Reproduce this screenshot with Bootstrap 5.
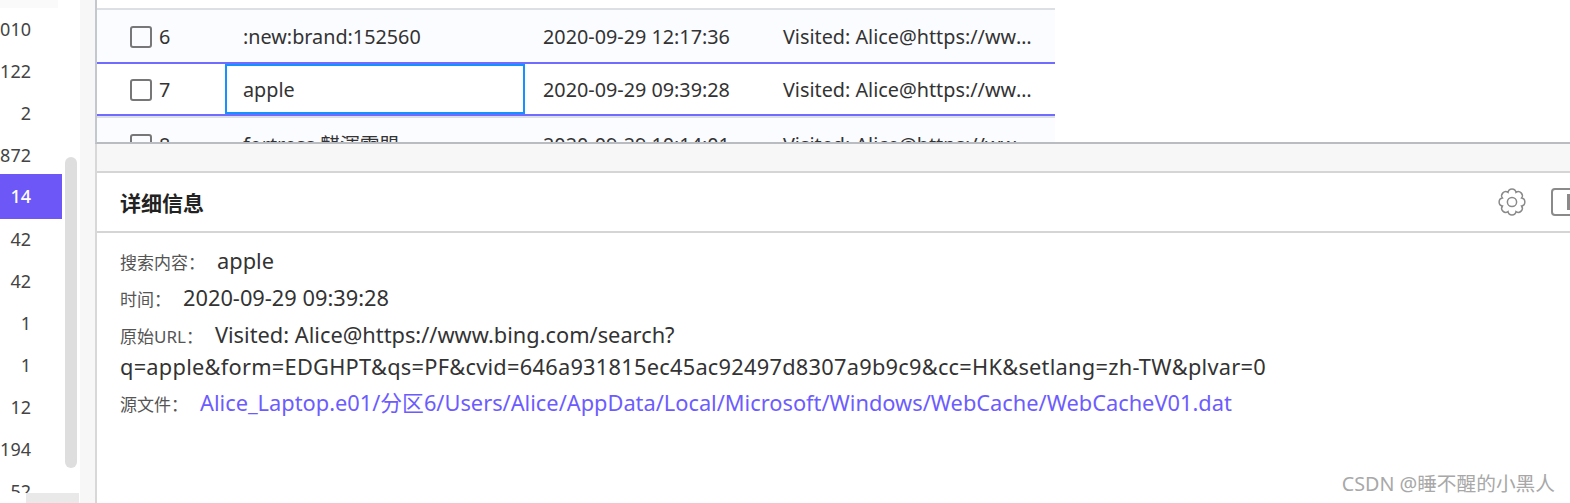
<!DOCTYPE html>
<html lang="zh-CN">
<head>
<meta charset="utf-8">
<title>详细信息</title>
<link href="https://cdn.jsdelivr.net/npm/bootstrap@5.3.0/dist/css/bootstrap.min.css" rel="stylesheet">
<style>
html,body{height:503px;overflow:hidden;}
body{font-family:"Noto Sans","Noto Sans CJK SC",sans-serif;font-size:18px;color:#333;background:#fff;}
.shell{height:503px;position:relative;overflow:hidden;}
.side{width:62px;height:493px;overflow:hidden;flex:none;}
.side-cap{height:8px;width:58px;background:#fafafa;}
.side-row{height:42px;padding-right:31px;color:#444;white-space:nowrap;}
.side-row.on{height:45px;margin:-2px 0 -1px;background:#6e57f7;color:#fff;font-weight:500;}
.side-thumb{position:absolute;left:65px;top:157px;width:12px;height:311px;border-radius:6px;background:#dedede;}
.side-bar{position:absolute;left:26px;top:493px;width:53px;height:10px;background:#e9e9e9;}
.gutter{width:33px;background:linear-gradient(90deg,#fff 18px,#f7f7f7 18px);flex:none;}
.main{border-left:2px solid #d8d8d8;min-width:0;}
.top-pane{height:144px;overflow:hidden;border-bottom:2px solid #b9bdc2;background:#fff;margin-left:-2px;border-left:2px solid #c4c7cc;}
.grid-wrap{width:958px;padding-top:8px;font-size:19.8px;}
.grid-row{height:54px;border-top:2px solid #dcdfe3;background:#fbfcff;white-space:nowrap;padding-top:1px;}
.grid-row.sel{height:54px;border-top:2px solid #6f6cff;border-bottom:2px solid #6f6cff;background:#fff;padding-top:0;}
.cell-a{width:128px;padding-left:33px;gap:7px;flex:none;}
.tick{width:22px;height:22px;border:2px solid #777;border-radius:3px;display:block;}
.cell-b{width:300px;padding-left:16px;border:2px solid transparent;flex:none;}
.cell-b.focus{border-color:#1890ff;padding-top:2px;}
.sel .cell-c,.sel .cell-d,.sel .cell-a{padding-top:2px;}
.cell-c{width:240px;padding-left:18px;flex:none;}
.cell-d{width:290px;padding:0 20px 0 18px;overflow:hidden;text-overflow:ellipsis;white-space:nowrap;display:block;flex:none;}
.band{height:27px;background:#f7f7f7;}
.detail{background:#fff;}
.detail-head{height:62px;border-top:2px solid #d5d5d5;border-bottom:2px solid #d5d5d5;padding-left:23px;}
.detail-title{font-size:21px;font-weight:700;color:#222;padding-top:4px;}
.ico-gear{width:30px;height:30px;margin-right:24px;flex:none;}
.ico-panel{width:26px;height:28px;margin-right:-7px;flex:none;}
.detail-body{padding:14px 23px 0;width:1240px;}
.line{margin:0 0 7px;line-height:28px;font-size:21.8px;color:#333;}
.line.wrap{line-height:30px;margin:-1px 0 7px;}
.tail{letter-spacing:.25px;}
.tag{font-size:17px;color:#555;margin-right:12px;}
.file-link{color:#6c5cff;text-decoration:none;}
.mark-csdn{position:absolute;right:15px;top:469px;font-size:19.7px;color:#a8a8a8;}
</style>
</head>
<body>
<div class="shell d-flex">
  <div class="side">
    <div class="side-cap"></div>
    <div class="side-row d-flex align-items-center justify-content-end">1010</div>
    <div class="side-row d-flex align-items-center justify-content-end">1122</div>
    <div class="side-row d-flex align-items-center justify-content-end">2</div>
    <div class="side-row d-flex align-items-center justify-content-end">1872</div>
    <div class="side-row on d-flex align-items-center justify-content-end">14</div>
    <div class="side-row d-flex align-items-center justify-content-end">42</div>
    <div class="side-row d-flex align-items-center justify-content-end">42</div>
    <div class="side-row d-flex align-items-center justify-content-end">1</div>
    <div class="side-row d-flex align-items-center justify-content-end">1</div>
    <div class="side-row d-flex align-items-center justify-content-end">12</div>
    <div class="side-row d-flex align-items-center justify-content-end">194</div>
    <div class="side-row d-flex align-items-center justify-content-end">52</div>
  </div>
  <div class="gutter"></div>
  <div class="side-thumb"></div>
  <div class="side-bar"></div>
  <div class="main flex-grow-1">
    <div class="top-pane">
      <div class="grid-wrap">
        <div class="grid-row d-flex align-items-center">
          <div class="cell-a d-flex align-items-center"><span class="tick"></span><span>6</span></div>
          <div class="cell-b">:new:brand:152560</div>
          <div class="cell-c">2020-09-29 12:17:36</div>
          <div class="cell-d">Visited: Alice@https://www.bing.com/search?q=new</div>
        </div>
        <div class="grid-row sel d-flex align-items-center">
          <div class="cell-a d-flex align-items-center"><span class="tick"></span><span>7</span></div>
          <div class="cell-b focus h-100 d-flex align-items-center">apple</div>
          <div class="cell-c">2020-09-29 09:39:28</div>
          <div class="cell-d">Visited: Alice@https://www.bing.com/search?q=apple</div>
        </div>
        <div class="grid-row d-flex align-items-center">
          <div class="cell-a d-flex align-items-center"><span class="tick"></span><span>8</span></div>
          <div class="cell-b">fortress 麒渾雷盟</div>
          <div class="cell-c">2020-09-29 10:14:01</div>
          <div class="cell-d">Visited: Alice@https://www.bing.com/search?q=fortress</div>
        </div>
      </div>
    </div>
    <div class="band"></div>
    <div class="detail">
      <div class="detail-head d-flex align-items-center">
        <div class="detail-title flex-grow-1">详细信息</div>
        <svg class="ico-gear" viewBox="1 1 26 26" fill="none" stroke="#8a8a8a" stroke-width="1.3"><circle cx="14" cy="14" r="4"/><path d="M22.31 10.56A3.5 3.5 0 0 1 22.31 17.44A3.5 3.5 0 0 1 17.44 22.31A3.5 3.5 0 0 1 10.56 22.31A3.5 3.5 0 0 1 5.69 17.44A3.5 3.5 0 0 1 5.69 10.56A3.5 3.5 0 0 1 10.56 5.69A3.5 3.5 0 0 1 17.44 5.69A3.5 3.5 0 0 1 22.31 10.56Z"/></svg>
        <svg class="ico-panel" viewBox="0 0 26 28" fill="none"><rect x="1" y="1" width="30" height="26" rx="3" stroke="#8a8a8a" stroke-width="2"/><rect x="16" y="6" width="4" height="16" fill="#8a8a8a"/></svg>
      </div>
      <div class="detail-body">
        <p class="line"><span class="tag">搜索内容：</span>apple</p>
        <p class="line"><span class="tag">时间：</span>2020-09-29 09:39:28</p>
        <p class="line wrap"><span class="tag">原始URL：</span>Visited: Alice@https://www.bing.com/search?<span class="tail">q=apple&amp;form=EDGHPT&amp;qs=PF&amp;cvid=646a931815ec45ac92497d8307a9b9c9&amp;cc=HK&amp;setlang=zh-TW&amp;plvar=0</span></p>
        <p class="line"><span class="tag">源文件：</span><a class="file-link" href="#">Alice_Laptop.e01/分区6/Users/Alice/AppData/Local/Microsoft/Windows/WebCache/WebCacheV01.dat</a></p>
      </div>
    </div>
  </div>
  <div class="mark-csdn">CSDN @睡不醒的小黑人</div>
</div>
<script src="https://cdn.jsdelivr.net/npm/bootstrap@5.3.0/dist/js/bootstrap.bundle.min.js"></script>
</body>
</html>
